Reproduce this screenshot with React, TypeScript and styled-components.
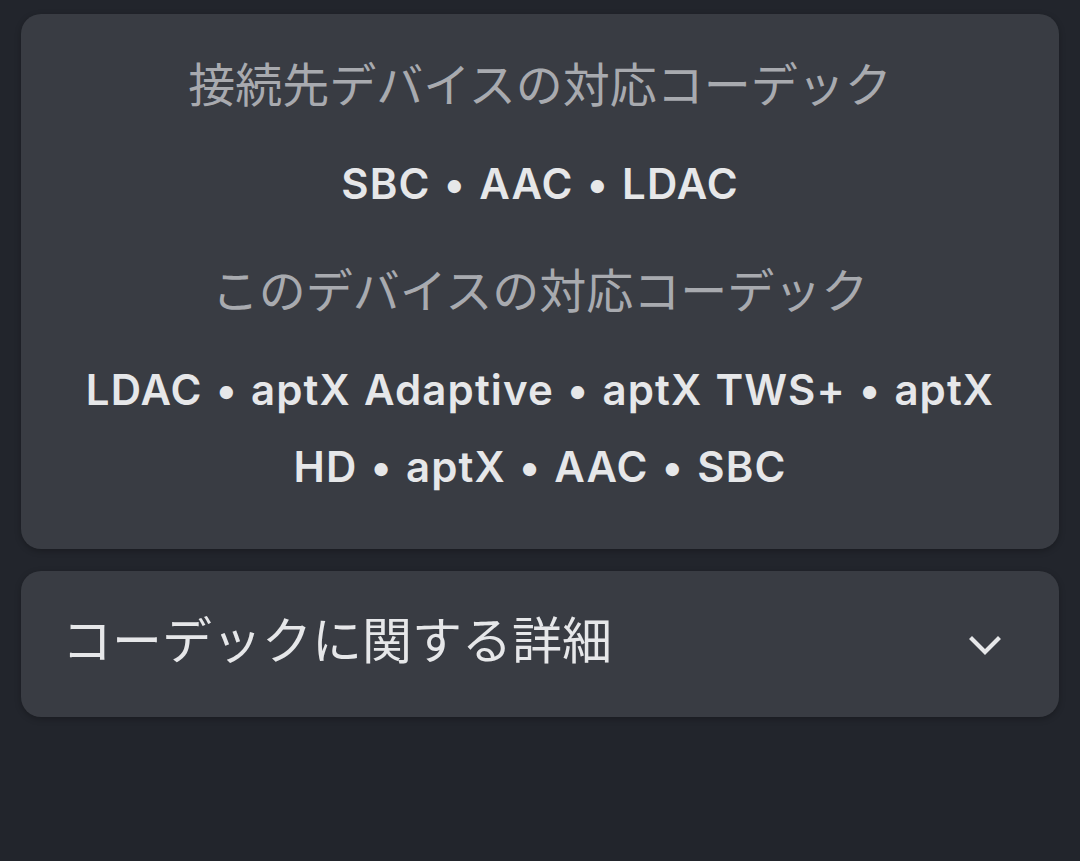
import React from "react"
import styled, {createGlobalStyle} from "styled-components";

const GlobalStyle = createGlobalStyle`
  html, body {
    margin: 0;
    padding: 0;
    background-color: #22252c;
  }
  body {
    font-family: Inter, "Noto Sans CJK JP", sans-serif;
  }
`

const StyledPage = styled.div`
  width: 1080px;
  height: 861px;
  padding: 14px 21px 0;
  box-sizing: border-box;
  display: flex;
  flex-direction: column;
  gap: 22px;
`

const StyledCard = styled.div`
  background-color: #393c43;
  border-radius: 20px;
  box-shadow: 0 2px 6px rgba(0, 0, 0, 0.25);
`

const StyledCodecCard = styled(StyledCard)`
  padding: 34px 40px 44px;
  text-align: center;
`

const StyledLabel = styled.div<{
    first?: boolean,
}>`
  font-family: "Noto Sans CJK JP", sans-serif;
  font-size: 47px;
  line-height: 68px;
  color: #a8aaaf;
  margin-top: ${props => props.first ? 0 : 32}px;
`

const StyledCodecs = styled.div`
  font-family: Inter, "Noto Sans CJK JP", sans-serif;
  font-weight: 600;
  font-size: 42px;
  line-height: 77px;
  letter-spacing: 1.1px;
  word-spacing: 1.5px;
  color: #e6e7e9;
  margin-top: 29px;
`

const StyledDetailsRow = styled(StyledCard)`
  height: 146px;
  padding: 0 58px 0 41px;
  display: flex;
  align-items: center;
  justify-content: space-between;
`

const StyledDetailsText = styled.div`
  font-family: "Noto Sans CJK JP", sans-serif;
  font-size: 50px;
  line-height: 70px;
  color: #e6e7e9;
  margin-bottom: 14px;
`

const StyledChevron = styled.svg`
  margin-top: 3px;
`

const ChevronDown: React.FC = () => (
    <StyledChevron width="32" height="20" viewBox="0 0 32 20" fill="none">
        <path d="M3 3 L16 16 L29 3" stroke="#e6e7e9" strokeWidth="4.2" strokeLinecap="square"/>
    </StyledChevron>
)

const remoteCodecs = ["SBC", "AAC", "LDAC"]
const localCodecs = ["LDAC", "aptX Adaptive", "aptX TWS+", "aptX HD", "aptX", "AAC", "SBC"]

export default function App() {
    return (
        <>
            <GlobalStyle/>
            <StyledPage>
                <StyledCodecCard>
                    <StyledLabel first>接続先デバイスの対応コーデック</StyledLabel>
                    <StyledCodecs>{remoteCodecs.join(" • ")}</StyledCodecs>
                    <StyledLabel>このデバイスの対応コーデック</StyledLabel>
                    <StyledCodecs>{localCodecs.join(" • ")}</StyledCodecs>
                </StyledCodecCard>
                <StyledDetailsRow>
                    <StyledDetailsText>コーデックに関する詳細</StyledDetailsText>
                    <ChevronDown/>
                </StyledDetailsRow>
            </StyledPage>
        </>
    )
}
